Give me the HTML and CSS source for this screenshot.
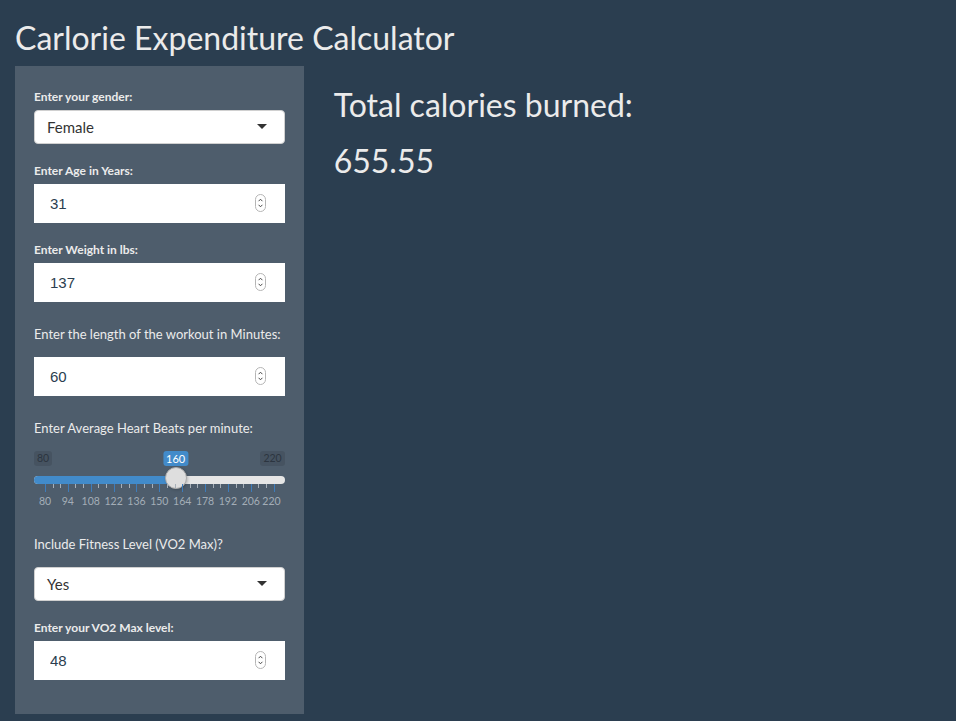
FILE: index.html
```html
<!DOCTYPE html>
<html>
<head>
<meta charset="utf-8">
<title>Carlorie Expenditure Calculator</title>
<link rel="stylesheet" href="styles.css">
</head>
<body>
<div class="page">
  <h2 class="title">Carlorie Expenditure Calculator</h2>
  <div class="row">
    <div class="well">
      <div class="form-group">
        <label class="lbl bold">Enter your gender:</label>
        <div class="select">Female</div>
      </div>
      <div class="form-group">
        <label class="lbl bold">Enter Age in Years:</label>
        <div class="num"><input class="num-input" type="number" value="31"><svg class="spin" width="11" height="18" viewBox="0 0 11 18"><rect x="0.5" y="0.5" width="10" height="17" rx="5" fill="#fff" stroke="#b5b5b5"/><path d="M3.6 7.2 L5.5 5.2 L7.4 7.2" stroke="#4a4a4a" stroke-width="1" fill="none"/><path d="M3.6 10.8 L5.5 12.8 L7.4 10.8" stroke="#4a4a4a" stroke-width="1" fill="none"/></svg></div>
      </div>
      <div class="form-group">
        <label class="lbl bold">Enter Weight in lbs:</label>
        <div class="num"><input class="num-input" type="number" value="137"><svg class="spin" width="11" height="18" viewBox="0 0 11 18"><rect x="0.5" y="0.5" width="10" height="17" rx="5" fill="#fff" stroke="#b5b5b5"/><path d="M3.6 7.2 L5.5 5.2 L7.4 7.2" stroke="#4a4a4a" stroke-width="1" fill="none"/><path d="M3.6 10.8 L5.5 12.8 L7.4 10.8" stroke="#4a4a4a" stroke-width="1" fill="none"/></svg></div>
      </div>
      <div class="form-group">
        <label class="lbl plain">Enter the length of the workout in Minutes:</label>
        <div class="num"><input class="num-input" type="number" value="60"><svg class="spin" width="11" height="18" viewBox="0 0 11 18"><rect x="0.5" y="0.5" width="10" height="17" rx="5" fill="#fff" stroke="#b5b5b5"/><path d="M3.6 7.2 L5.5 5.2 L7.4 7.2" stroke="#4a4a4a" stroke-width="1" fill="none"/><path d="M3.6 10.8 L5.5 12.8 L7.4 10.8" stroke="#4a4a4a" stroke-width="1" fill="none"/></svg></div>
      </div>
      <div class="form-group">
        <label class="lbl plain">Enter Average Heart Beats per minute:</label>
        <div class="slider">
          <div class="irs-labels"><span class="irs-minmax">80</span><span class="irs-minmax">220</span></div>
          <span class="irs-single" style="left: calc(57.143% - 1.571px)">160</span>
          <div class="irs-line"><div class="irs-bar" style="width: calc(57.143% - 1.571px)"></div></div>
          <div class="irs-handle" style="left: calc(57.143% - 12.571px)"></div>
          <div class="irs-grid">
            <span class="pol major" style="left:0%"></span>
            <span class="pol" style="left:3.333%"></span>
            <span class="pol" style="left:6.667%"></span>
            <span class="pol major" style="left:10%"></span>
            <span class="pol" style="left:13.333%"></span>
            <span class="pol" style="left:16.667%"></span>
            <span class="pol major" style="left:20%"></span>
            <span class="pol" style="left:23.333%"></span>
            <span class="pol" style="left:26.667%"></span>
            <span class="pol major" style="left:30%"></span>
            <span class="pol" style="left:33.333%"></span>
            <span class="pol" style="left:36.667%"></span>
            <span class="pol major" style="left:40%"></span>
            <span class="pol" style="left:43.333%"></span>
            <span class="pol" style="left:46.667%"></span>
            <span class="pol major" style="left:50%"></span>
            <span class="pol" style="left:53.333%"></span>
            <span class="pol" style="left:56.667%"></span>
            <span class="pol major" style="left:60%"></span>
            <span class="pol" style="left:63.333%"></span>
            <span class="pol" style="left:66.667%"></span>
            <span class="pol major" style="left:70%"></span>
            <span class="pol" style="left:73.333%"></span>
            <span class="pol" style="left:76.667%"></span>
            <span class="pol major" style="left:80%"></span>
            <span class="pol" style="left:83.333%"></span>
            <span class="pol" style="left:86.667%"></span>
            <span class="pol major" style="left:90%"></span>
            <span class="pol" style="left:93.333%"></span>
            <span class="pol" style="left:96.667%"></span>
            <span class="pol major" style="left:100%"></span>
            <span class="gtext" style="left:0%">80</span>
            <span class="gtext" style="left:10%">94</span>
            <span class="gtext" style="left:20%">108</span>
            <span class="gtext" style="left:30%">122</span>
            <span class="gtext" style="left:40%">136</span>
            <span class="gtext" style="left:50%">150</span>
            <span class="gtext" style="left:60%">164</span>
            <span class="gtext" style="left:70%">178</span>
            <span class="gtext" style="left:80%">192</span>
            <span class="gtext" style="left:90%">206</span>
            <span class="gtext last" style="left:100%">220</span>
          </div>
        </div>
      </div>
      <div class="form-group">
        <label class="lbl plain">Include Fitness Level (VO2 Max)?</label>
        <div class="select">Yes</div>
      </div>
      <div class="form-group">
        <label class="lbl bold">Enter your VO2 Max level:</label>
        <div class="num"><input class="num-input" type="number" value="48"><svg class="spin" width="11" height="18" viewBox="0 0 11 18"><rect x="0.5" y="0.5" width="10" height="17" rx="5" fill="#fff" stroke="#b5b5b5"/><path d="M3.6 7.2 L5.5 5.2 L7.4 7.2" stroke="#4a4a4a" stroke-width="1" fill="none"/><path d="M3.6 10.8 L5.5 12.8 L7.4 10.8" stroke="#4a4a4a" stroke-width="1" fill="none"/></svg></div>
      </div>
    </div>
    <div class="main">
      <h2 class="result">Total calories burned:</h2>
      <h2 class="result">655.55</h2>
    </div>
  </div>
</div>
</body>
</html>
```
FILE: styles.css
```css
* { box-sizing: border-box; }
html, body {
  margin: 0;
  background: #2b3e50;
  color: #ebebeb;
  font-family: Lato, "Open Sans", sans-serif;
  font-size: 15px;
  line-height: 1.42857;
}
.page { padding: 0 15px; }
.title, .result {
  font-size: 32px;
  font-weight: 400;
  line-height: 1.1;
  margin: 21px 0 10.5px;
  color: #ebebeb;
}
.title { margin-top: 20px; }
.row {
  display: grid;
  grid-template-columns: 288.67px 1fr;
  column-gap: 30px;
  align-items: start;
}
.main { min-width: 0; }
.well {
  background: #4e5d6c;
  padding: 22px 19px 19px;
  margin-bottom: 20px;
}
.form-group { margin-bottom: 18px; }
.form-group:last-child { margin-bottom: 15px; }
.lbl {
  display: block;
  font-size: 12px;
  line-height: 17px;
  color: #ebebeb;
}
.lbl.bold { font-weight: 700; margin-bottom: 5px; }
.lbl.plain {
  font-weight: 400;
  font-size: 13px;
  padding-top: 6px;
  margin-bottom: 14px;
}
.select {
  position: relative;
  height: 34px;
  background: #fff;
  border: 1px solid #d0d0d0;
  border-radius: 4px;
  padding: 6px 12px;
  font-size: 15px;
  line-height: 20px;
  color: #333;
}
.select::after {
  content: "";
  position: absolute;
  right: 17px;
  top: 50%;
  margin-top: -3px;
  border-style: solid;
  border-width: 5px 5px 0 5px;
  border-color: #333 transparent transparent transparent;
}
.num { position: relative; }
.num-input {
  display: block;
  width: 100%;
  height: 39px;
  margin: 0;
  padding: 8px 16px;
  border: 0;
  border-radius: 0;
  background: #fff;
  color: #2b3e50;
  font-family: "Liberation Sans", Arial, sans-serif;
  font-size: 15px;
  line-height: 21px;
  outline: none;
  -moz-appearance: textfield;
  appearance: textfield;
}
.num-input::-webkit-inner-spin-button,
.num-input::-webkit-outer-spin-button { -webkit-appearance: none; margin: 0; }
.spin {
  position: absolute;
  right: 19px;
  top: 10px;
}
.slider {
  position: relative;
  height: 61px;
}
.irs-labels {
  display: flex;
  justify-content: space-between;
  height: 15px;
}
.irs-minmax, .irs-single {
  font-size: 10.5px;
  line-height: 13px;
  padding: 1px 3px;
  border-radius: 3px;
}
.irs-minmax {
  background: rgba(0, 0, 0, 0.1);
  color: #2c3540;
}
.irs-single {
  position: absolute;
  top: 0;
  transform: translateX(-50%);
  background: #428bca;
  color: #fff;
  font-size: 11px;
}
.irs-line {
  margin-top: 10px;
  height: 8px;
  border-radius: 4px;
  background: #e6e6e6;
  overflow: hidden;
}
.irs-bar {
  height: 100%;
  background: #428bca;
}
.irs-handle {
  position: absolute;
  top: 16px;
  width: 22px;
  height: 22px;
  border-radius: 50%;
  background: #dedede;
  border: 1px solid #ababab;
  box-shadow: 1px 1px 3px rgba(0, 0, 0, 0.2);
}
.irs-grid {
  position: relative;
  margin: 0 11px;
  height: 24px;
}
.pol {
  position: absolute;
  top: 0;
  width: 1px;
  height: 4px;
  background: #a7b0b9;
}
.pol.major {
  height: 8px;
  background: #3d7cbb;
}
.gtext {
  position: absolute;
  top: 11px;
  transform: translateX(-50%);
  font-size: 10.5px;
  line-height: 12px;
  color: #a3adb7;
  white-space: nowrap;
}
.gtext.last { transform: translateX(-62%); }
```
